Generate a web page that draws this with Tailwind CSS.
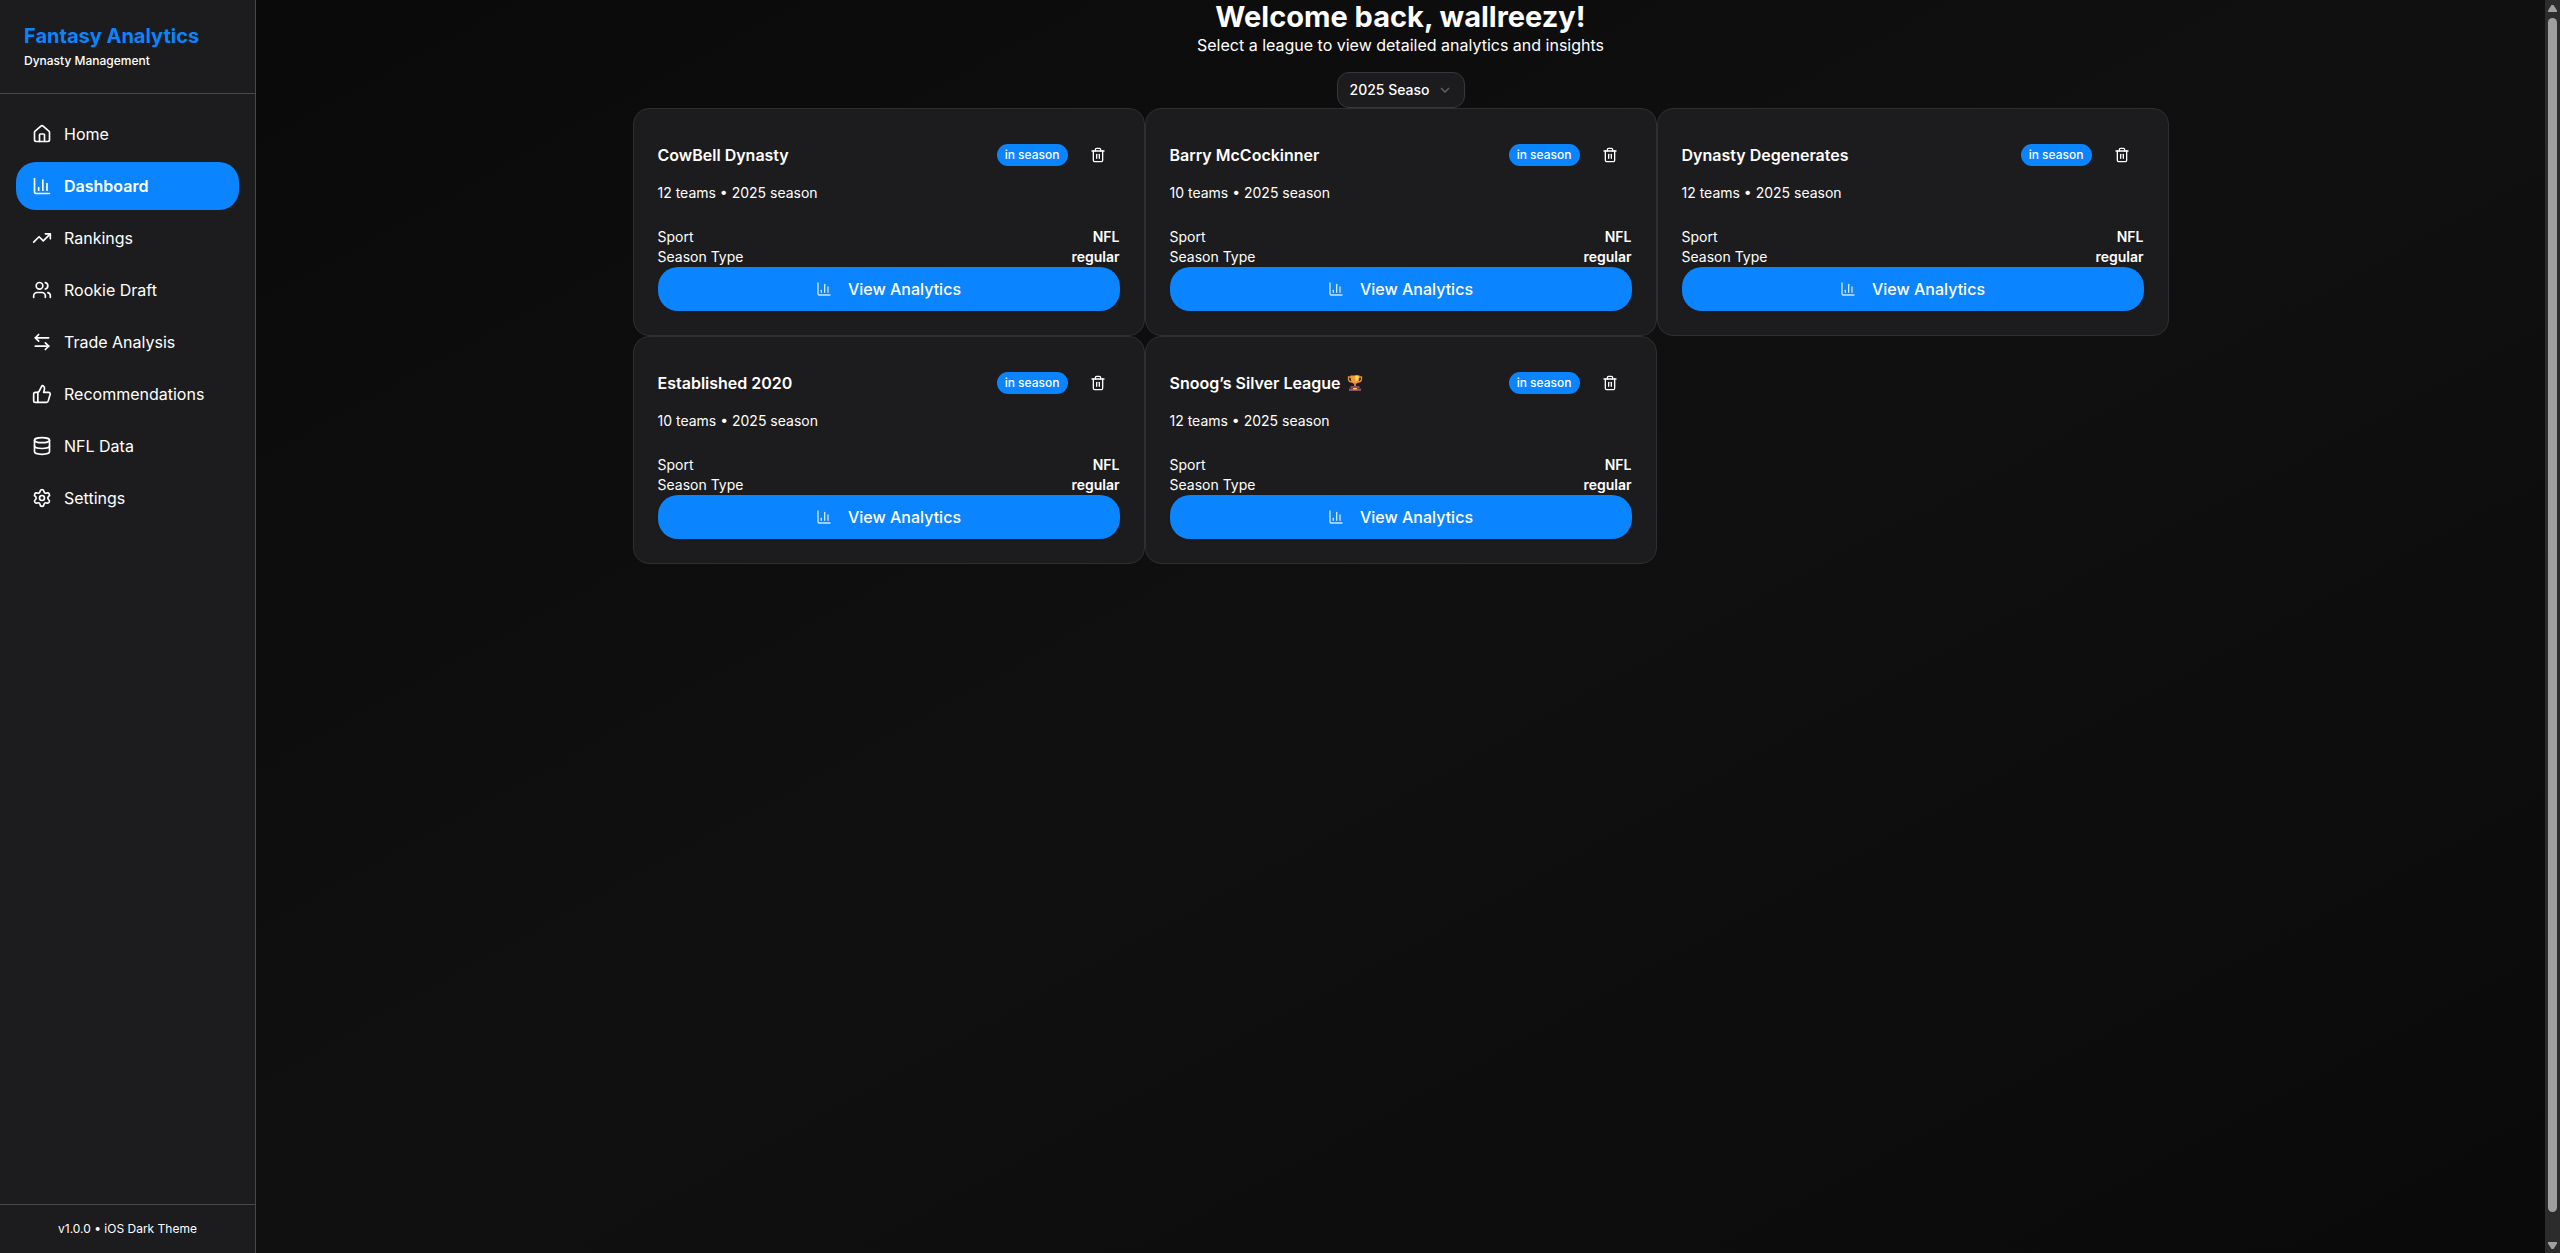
<!DOCTYPE html>
<html lang="en">
<head>
<meta charset="utf-8">
<meta name="viewport" content="width=device-width, initial-scale=1">
<title>Fantasy Analytics</title>
<script src="https://cdn.jsdelivr.net/npm/@tailwindcss/browser@4"></script>
</head>
<body class="flex h-screen overflow-hidden bg-[#0a0a0a] font-['Inter',sans-serif] text-base text-white">

<svg class="hidden" aria-hidden="true">
  <symbol id="house" viewBox="0 0 24 24"><path d="M15 21v-8a1 1 0 0 0-1-1h-4a1 1 0 0 0-1 1v8"/><path d="M3 10a2 2 0 0 1 .709-1.528l7-5.999a2 2 0 0 1 2.582 0l7 5.999A2 2 0 0 1 21 10v9a2 2 0 0 1-2 2H5a2 2 0 0 1-2-2z"/></symbol>
  <symbol id="chart" viewBox="0 0 24 24"><path d="M3 3v16a2 2 0 0 0 2 2h16"/><path d="M18 17V9"/><path d="M13 17V5"/><path d="M8 17v-3"/></symbol>
  <symbol id="trending" viewBox="0 0 24 24"><path d="M16 7h6v6"/><path d="m22 7-8.500 8.500-5-5L2 17"/></symbol>
  <symbol id="users" viewBox="0 0 24 24"><path d="M16 21v-2a4 4 0 0 0-4-4H6a4 4 0 0 0-4 4v2"/><circle cx="9" cy="7" r="4"/><path d="M22 21v-2a4 4 0 0 0-3-3.870"/><path d="M16 3.130a4 4 0 0 1 0 7.750"/></symbol>
  <symbol id="arrows" viewBox="0 0 24 24"><path d="M8 3 4 7l4 4"/><path d="M4 7h16"/><path d="m16 21 4-4-4-4"/><path d="M20 17H4"/></symbol>
  <symbol id="thumb" viewBox="0 0 24 24"><path d="M7 10v12"/><path d="M15 5.880 14 10h5.830a2 2 0 0 1 1.920 2.560l-2.330 8A2 2 0 0 1 17.500 22H4a2 2 0 0 1-2-2v-8a2 2 0 0 1 2-2h2.760a2 2 0 0 0 1.790-1.110L12 2a3.130 3.130 0 0 1 3 3.880Z"/></symbol>
  <symbol id="database" viewBox="0 0 24 24"><ellipse cx="12" cy="5" rx="9" ry="3"/><path d="M3 5V19A9 3 0 0 0 21 19V5"/><path d="M3 12A9 3 0 0 0 21 12"/></symbol>
  <symbol id="gear" viewBox="0 0 24 24"><path d="M9.671 4.136a2.340 2.340 0 0 1 4.659 0 2.340 2.340 0 0 0 3.319 1.915 2.340 2.340 0 0 1 2.330 4.033 2.340 2.340 0 0 0 0 3.831 2.340 2.340 0 0 1-2.330 4.033 2.340 2.340 0 0 0-3.319 1.915 2.340 2.340 0 0 1-4.659 0 2.340 2.340 0 0 0-3.320-1.915 2.340 2.340 0 0 1-2.330-4.033 2.340 2.340 0 0 0 0-3.831A2.340 2.340 0 0 1 6.350 6.051a2.340 2.340 0 0 0 3.319-1.915"/><circle cx="12" cy="12" r="3"/></symbol>
  <symbol id="trash" viewBox="0 0 24 24"><path d="M3 6h18"/><path d="M19 6v14a2 2 0 0 1-2 2H7a2 2 0 0 1-2-2V6"/><path d="M8 6V4a2 2 0 0 1 2-2h4a2 2 0 0 1 2 2v2"/><path d="M10 11v6"/><path d="M14 11v6"/></symbol>
  <symbol id="chevron" viewBox="0 0 24 24"><path d="m6 9 6 6 6-6"/></symbol>
  <symbol id="trophy" viewBox="0 0 16 16"><path d="M4 2H1.500v2.500Q2 7 5 7M12 2h2.500v2.500Q14 7 11 7" fill="none" stroke="#e8902e" stroke-width="1.300"/><path d="M3.500.5h9c0 5-1 8-4.500 8.500C4.500 8.500 3.500 5.500 3.500.5Z" fill="#f59b36"/><path d="M8 .5h3.500c0 3-.5 5-3 6Z" fill="#ffd85e"/><path d="M7 8.500h2V12H7z" fill="#d97a28"/><path d="M3.500 11h9v2.500h-9z" fill="#8a4a5c"/><path d="M2 13.500h12V16H2z" fill="#8a5262"/><path d="M6 13h4v1.500H6z" fill="#ffc94f"/></symbol>
</svg>

<aside class="flex w-64 shrink-0 flex-col border-r border-[#48484a] bg-[#1c1c1e]">
  <header class="border-b border-[#48484a] px-6 pt-[22px] pb-6">
    <h1 class="text-xl leading-7 font-bold text-[#0a84ff]">Fantasy Analytics</h1>
    <p class="mt-[3px] text-xs font-medium">Dynasty Management</p>
  </header>
  <nav class="flex grow flex-col gap-1 p-4" id="nav"></nav>
  <footer class="border-t border-[#48484a] p-4 text-center text-xs">v1.0.0 • iOS Dark Theme</footer>
</aside>

<main class="min-w-0 grow bg-linear-to-br from-[#0a0a0a] via-[#101010] to-[#0a0a0a]">
  <div class="mx-auto max-w-[1536px]">
    <header class="flex flex-col items-center">
      <h2 class="text-[29px] leading-[34px] font-bold">Welcome back, wallreezy!</h2>
      <p class="text-base leading-[22px]">Select a league to view detailed analytics and insights</p>
      <div class="relative mt-4 w-32">
        <label for="season" class="sr-only">Season</label>
        <select id="season" class="block h-9 w-full appearance-none rounded-xl border border-[#38383a] bg-[#1c1c1e] pr-[34px] pl-3 text-sm font-medium text-white">
          <option>2025 Season</option>
        </select>
        <svg class="pointer-events-none absolute top-2.5 right-3 size-4 fill-none stroke-[#636366] stroke-2" aria-hidden="true"><use href="#chevron"/></svg>
      </div>
    </header>
    <section class="grid grid-cols-3" id="leagues" aria-label="Leagues"></section>
  </div>
</main>

<!-- Page scroll track -->
<div class="flex w-[15px] shrink-0 flex-col items-center bg-[#2c2c2c] pt-[5px] pb-1" aria-hidden="true">
  <svg class="h-[7px] w-[9px] fill-[#9f9f9f]" viewBox="0 0 9 7"><path d="M3.500 0h2L9 5.500V7H0V5.500z"/></svg>
  <div class="mt-1.5 mb-[30px] w-[9px] grow rounded-full bg-[#9f9f9f]"></div>
  <svg class="h-[7px] w-[9px] fill-[#9f9f9f]" viewBox="0 0 9 7"><path d="M3.500 7h2L9 1.500V0H0v1.500z"/></svg>
</div>

<script>
const icon = (name, cls) => `<svg class="${cls}" stroke-linecap="round" stroke-linejoin="round" aria-hidden="true"><use href="#${name}"/></svg>`;

const pages = [['house', 'Home'], ['chart', 'Dashboard'], ['trending', 'Rankings'], ['users', 'Rookie Draft'], ['arrows', 'Trade Analysis'], ['thumb', 'Recommendations'], ['database', 'NFL Data'], ['gear', 'Settings']];
document.getElementById('nav').innerHTML = pages.map(([glyph, label]) => {
  const active = label === 'Dashboard';
  return `<a href="#" ${active ? 'aria-current="page"' : ''} class="flex h-12 items-center gap-3 rounded-[20px] px-4 ${active ? 'bg-[#0a84ff] font-semibold' : 'font-normal'}">${icon(glyph, 'size-5 fill-none stroke-white stroke-2')}<span>${label}</span></a>`;
}).join('');

const leagues = [['CowBell Dynasty', 12], ['Barry McCockinner', 10], ['Dynasty Degenerates', 12], ['Established 2020', 10], ['Snoog’s Silver League', 12, true]];
document.getElementById('leagues').innerHTML = leagues.map(([name, teams, trophy]) => `
  <article class="rounded-2xl border border-[#2f2f31] bg-[#1c1c1e] p-6">
    <div class="flex h-11 items-center gap-2">
      <h3 class="flex grow items-center gap-1.5 font-semibold">${name}${trophy ? '<svg class="size-4" role="img" aria-label="trophy"><use href="#trophy"/></svg>' : ''}</h3>
      <span class="rounded-full bg-[#0a84ff] px-2 py-[3px] text-xs font-medium">in season</span>
      <button type="button" aria-label="Delete league" class="flex size-11 items-center justify-center">${icon('trash', 'size-4 fill-none stroke-white stroke-2')}</button>
    </div>
    <p class="mt-1.5 text-sm">${teams} teams • 2025 season</p>
    <dl class="mt-6 text-sm">
      <div class="flex justify-between"><dt>Sport</dt><dd class="font-semibold">NFL</dd></div>
      <div class="flex justify-between"><dt>Season Type</dt><dd class="font-semibold">regular</dd></div>
    </dl>
    <button type="button" class="flex h-11 w-full items-center justify-center gap-4 rounded-[20px] bg-[#0a84ff] font-medium shadow-sm">${icon('chart', 'size-4 fill-none stroke-white/80 stroke-2')}View Analytics</button>
  </article>`).join('');
</script>
</body>
</html>
